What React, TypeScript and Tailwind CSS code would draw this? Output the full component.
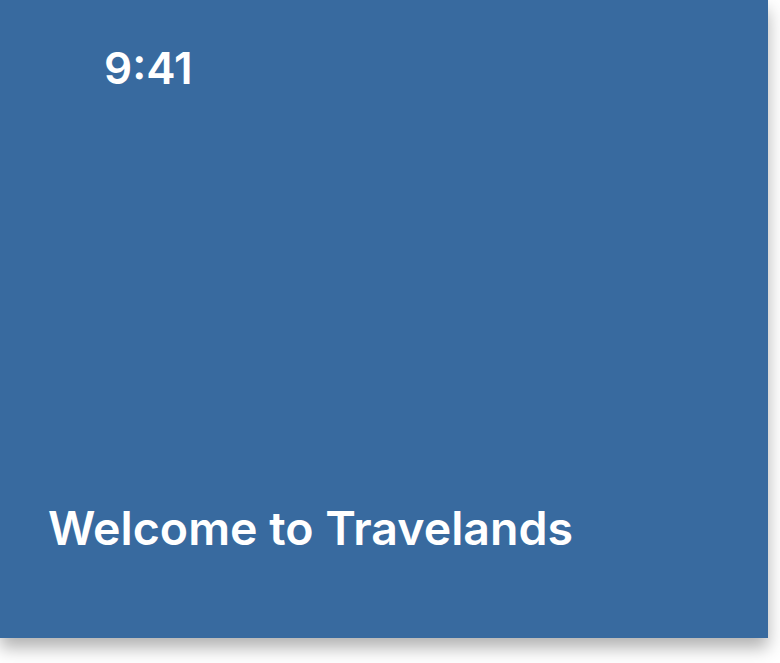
export default function App() {
  return (
    <div className="w-[780px] h-[663px] bg-white overflow-hidden" style={{ fontFamily: "Inter, 'Noto Sans', sans-serif" }}>
      <div className="w-[768px] h-[638px] bg-[#386a9f] shadow-[0_10px_16px_rgba(0,0,0,0.3)] flex flex-col justify-between text-white">
        <div className="pl-[104px] pt-[42px] text-[44px] leading-[52px] font-semibold">9:41</div>
        <div className="pl-[48px] pb-[84px] text-[46.5px] leading-[52px] font-semibold">Welcome to Travelands</div>
      </div>
    </div>
  );
}
